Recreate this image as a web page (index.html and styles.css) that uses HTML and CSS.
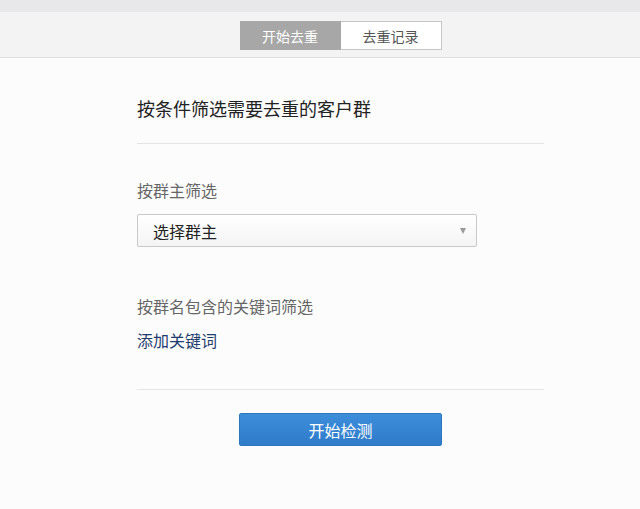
FILE: index.html
```html
<!DOCTYPE html>
<html lang="zh-CN">
<head>
    <meta charset="UTF-8">
    <meta name="viewport" content="width=device-width, initial-scale=1.0">
    <title>客户群去重</title>
    <link rel="stylesheet" href="styles.css">
</head>
<body>
    <div class="top-strip"></div>
    <div class="header">
        <div class="tabs">
            <button class="tab active">开始去重</button>
            <button class="tab">去重记录</button>
        </div>
    </div>

    <div class="main">
        <div class="panel">
            <div class="title">按条件筛选需要去重的客户群</div>
            <div class="divider"></div>

            <div class="field-label owner-label">按群主筛选</div>
            <div class="select">
                <span>选择群主</span>
                <span class="arrow"></span>
            </div>

            <div class="field-label keyword-label">按群名包含的关键词筛选</div>
            <a class="add-link" href="#">添加关键词</a>

            <div class="divider bottom"></div>

            <div class="actions">
                <button class="start-btn">开始检测</button>
            </div>
        </div>
    </div>
</body>
</html>
```

FILE: styles.css
```css
body {
    margin: 0;
    padding: 0;
    font-family: "Noto Sans CJK SC", "Noto Sans", sans-serif;
    background: #fcfcfc;
    color: #333;
}

.top-strip {
    height: 12px;
    background: #e8e8ea;
}

.header {
    height: 45px;
    background: #f3f3f3;
    border-bottom: 1px solid #dedede;
    display: flex;
    justify-content: center;
    padding-left: 41px;
}

.tabs {
    display: flex;
    margin-top: 9px;
    height: 29px;
}
.tab {
    width: 101px;
    height: 29px;
    border: 1px solid #c6c6c6;
    background: #fff;
    color: #555;
    font-family: inherit;
    font-size: 14px;
    padding: 0;
    cursor: pointer;
}
.tab + .tab {
    border-left: none;
}
.tab.active {
    background: #a7a7a7;
    border-color: #a7a7a7;
    color: #fff;
}

.main {
    display: flex;
    justify-content: center;
    padding-left: 41px;
}

.panel {
    width: 407px;
}

.title {
    font-size: 18px;
    color: #222;
    margin-top: 37px;
    line-height: 26px;
}

.divider {
    height: 1px;
    background: #e4e4e4;
    margin-top: 22px;
}

.field-label {
    font-size: 16px;
    color: #666;
    line-height: 22px;
}
.owner-label {
    margin-top: 35px;
}
.keyword-label {
    margin-top: 48px;
}

.select {
    margin-top: 13px;
    width: 340px;
    height: 33px;
    box-sizing: border-box;
    border: 1px solid #c9c9c9;
    border-radius: 2px;
    background: linear-gradient(#fff, #f4f4f4);
    display: flex;
    align-items: center;
    justify-content: space-between;
    padding: 0 10px 0 15px;
    font-size: 16px;
    color: #222;
}
.arrow {
    width: 0;
    height: 0;
    border-left: 3px solid transparent;
    border-right: 3px solid transparent;
    border-top: 6px solid #999;
}

.add-link {
    display: block;
    margin-top: 12px;
    font-size: 16px;
    line-height: 22px;
    color: #1f3c6e;
    text-decoration: none;
}

.divider.bottom {
    margin-top: 38px;
}

.actions {
    display: flex;
    justify-content: center;
    margin-top: 23px;
}

.start-btn {
    width: 203px;
    height: 33px;
    border: 1px solid #2c76c0;
    border-radius: 2px;
    background: linear-gradient(#3d8ddb, #2f7cc9);
    color: #fff;
    font-family: inherit;
    font-size: 16px;
    cursor: pointer;
}
.start-btn:hover {
    background: #2f7cc9;
}
```
